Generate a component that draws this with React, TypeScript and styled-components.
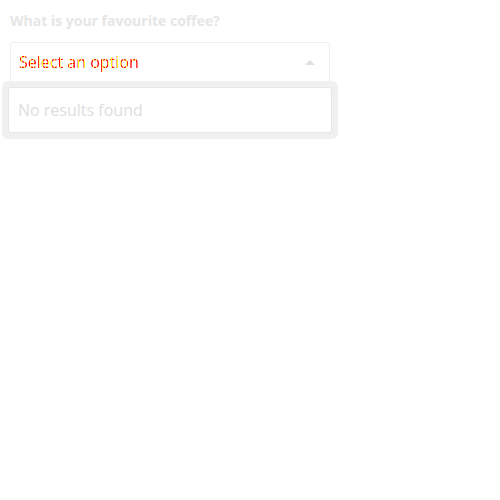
import React from "react";
import styled, { createGlobalStyle } from "styled-components";

const Global = createGlobalStyle`
  html, body { margin: 0; background: #fff; font-family: "Open Sans", sans-serif; min-height: 100vh; }
  #root { min-height: 100vh; }
`;

const Page = styled.div`
  padding: 10px 10px;
  width: 320px;
  min-height: 480px;
  position: relative;
`;

const Label = styled.label`
  display: block;
  font-size: 14px;
  font-weight: 700;
  color: #e6e6e6;
  line-height: 22px;
  margin-bottom: 10px;
`;

const Select = styled.div`
  height: 40px;
  border: 1px solid #efefef;
  border-radius: 2px;
  box-sizing: border-box;
  display: flex;
  align-items: center;
  justify-content: space-between;
  padding: 0 14px 0 8px;
`;

const Value = styled.span`
  font-size: 16px;
  background-image: repeating-linear-gradient(90deg, #ff0000 0 2px, #ffff00 2px 3px);
  -webkit-background-clip: text;
  background-clip: text;
  color: transparent;
`;

const Arrow = styled.span`
  width: 0;
  height: 0;
  border-left: 5px solid transparent;
  border-right: 5px solid transparent;
  border-bottom: 5px solid #e0e0e0;
`;

const Dropdown = styled.div`
  position: absolute;
  left: 2px;
  top: 81px;
  width: 336px;
  box-sizing: border-box;
  background: #f0f0f0;
  border-radius: 6px;
  padding: 6px 6px;
`;

const Search = styled.div`
  height: 46px;
  box-sizing: border-box;
  display: flex;
  align-items: center;
  border: 1px solid #e6e6e6;
  box-shadow: inset 0 0 0 1px #fff;
  border-radius: 3px;
  background: #fff;
  font-size: 16px;
  color: #dedede;
  padding: 0 9px;
`;

export default function App() {
  return (
    <>
      <Global />
      <Page>
        <Label>What is your favourite coffee?</Label>
        <Select>
          <Value>Select an option</Value>
          <Arrow />
        </Select>
        <Dropdown>
          <Search>No results found</Search>
        </Dropdown>
      </Page>
    </>
  );
}
